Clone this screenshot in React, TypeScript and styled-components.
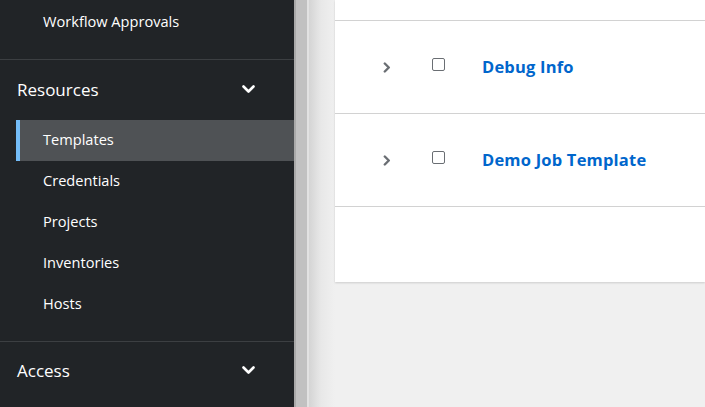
import React from "react";
import styled, { createGlobalStyle } from "styled-components";

const Global = createGlobalStyle`
  html, body { margin: 0; padding: 0; height: 100%; overflow: hidden; }
  body { font-family: "Open Sans", "Liberation Sans", sans-serif; background: #f0f0f0; }
  #root { height: 100%; }
`;

const Page = styled.div`
  display: flex;
  width: 705px;
  height: 407px;
  overflow: hidden;
`;

const Sidebar = styled.nav`
  width: 294px;
  flex: none;
  background: #212427;
  display: flex;
  flex-direction: column;
`;

const Section = styled.div<{ $top?: number; $bottom?: number }>`
  display: flex;
  flex-direction: column;
  padding-top: ${(p) => p.$top ?? 0}px;
  padding-bottom: ${(p) => p.$bottom ?? 0}px;
`;

const Divider = styled.div`
  height: 1px;
  background: #3c3f42;
  flex: none;
`;

const SectionHeader = styled.div<{ $h: number }>`
  height: ${(p) => p.$h}px;
  display: flex;
  align-items: center;
  justify-content: space-between;
  padding: 0 39px 2px 17px;
  box-sizing: border-box;
  color: #ffffff;
  font-size: 17px;
`;

const NavItem = styled.div<{ $active?: boolean; $pb?: number }>`
  height: 41px;
  box-sizing: border-box;
  margin-left: 16px;
  display: flex;
  align-items: center;
  padding: 0 0 ${(p) => p.$pb ?? 3}px 23px;
  color: #ffffff;
  font-size: 14.6px;
  background: ${(p) => (p.$active ? "#4f5255" : "transparent")};
  border-left: 4px solid ${(p) => (p.$active ? "#73bcf7" : "transparent")};
`;

const Strip = styled.div`
  width: 15px;
  flex: none;
  display: flex;
`;

const StripPart = styled.div<{ $w: number; $c: string }>`
  width: ${(p) => p.$w}px;
  background: ${(p) => p.$c};
`;

const Main = styled.main`
  flex: 1;
  background: linear-gradient(to right, #d4d4d4 0px, #e8e8e8 12px, #efefef 24px, #f0f0f0 26px);
  padding-left: 26px;
`;

const Card = styled.div`
  background: #ffffff;
  height: 282px;
  box-shadow: 0 1px 2px rgba(0, 0, 0, 0.15);
  display: flex;
  flex-direction: column;
`;

const CardTop = styled.div`
  height: 20px;
`;

const Row = styled.div`
  height: 92px;
  border-top: 1px solid #d2d2d2;
  display: flex;
  align-items: center;
`;

const ToggleCell = styled.div`
  width: 97px;
  padding-left: 48px;
  box-sizing: border-box;
  display: flex;
  align-items: center;
`;

const CheckCell = styled.div`
  width: 50px;
  display: flex;
  align-items: center;
  margin-top: -5px;
`;

const Check = styled.span`
  width: 11px;
  height: 11px;
  border: 1px solid #6a6e73;
  border-radius: 2px;
  background: #fff;
  display: block;
`;

const NameLink = styled.a`
  color: #0066cc;
  font-weight: 700;
  font-size: 16.5px;
  letter-spacing: 0.2px;
  text-decoration: none;
  margin-top: -2px;
  font-family: "Open Sans", "Liberation Sans", sans-serif;
`;

const Footer = styled.div`
  flex: 1;
  border-top: 1px solid #d2d2d2;
`;

const AngleDown = () => (
  <svg width="13" height="9" viewBox="0 0 13 9">
    <path d="M1.5 1.5 L6.5 6.5 L11.5 1.5" fill="none" stroke="#fff" strokeWidth="2.6" strokeLinecap="round" strokeLinejoin="round" />
  </svg>
);

const AngleRight = () => (
  <svg width="8" height="11" viewBox="0 0 8 11">
    <path d="M1.8 1.5 L5.8 5.5 L1.8 9.5" fill="none" stroke="#6a6e73" strokeWidth="2.4" strokeLinecap="round" strokeLinejoin="round" />
  </svg>
);

const rows = ["Debug Info", "Demo Job Template"];

export default function App() {
  return (
    <>
      <Global />
      <Page>
        <Sidebar>
          <Section $bottom={18}>
            <NavItem $pb={0}>Workflow Approvals</NavItem>
          </Section>
          <Divider />
          <Section $bottom={16}>
            <SectionHeader $h={60}>
              <span>Resources</span>
              <AngleDown />
            </SectionHeader>
            <NavItem $active>Templates</NavItem>
            <NavItem>Credentials</NavItem>
            <NavItem>Projects</NavItem>
            <NavItem>Inventories</NavItem>
            <NavItem>Hosts</NavItem>
          </Section>
          <Divider />
          <Section>
            <SectionHeader $h={58}>
              <span>Access</span>
              <AngleDown />
            </SectionHeader>
          </Section>
        </Sidebar>
        <Strip>
          <StripPart $w={2} $c="#a9a9a9" />
          <StripPart $w={11} $c="#c1c1c1" />
          <StripPart $w={2} $c="#e2e2e2" />
        </Strip>
        <Main>
          <Card>
            <CardTop />
            {rows.map((r) => (
              <Row key={r}>
                <ToggleCell>
                  <AngleRight />
                </ToggleCell>
                <CheckCell>
                  <Check />
                </CheckCell>
                <NameLink href="#">{r}</NameLink>
              </Row>
            ))}
            <Footer />
          </Card>
        </Main>
      </Page>
    </>
  );
}
